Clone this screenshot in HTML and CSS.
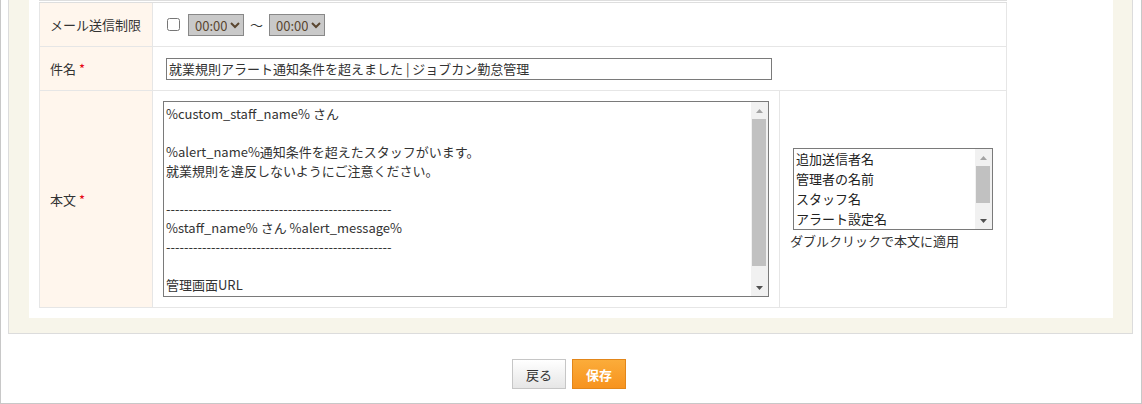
FILE: index.html
```html
<!DOCTYPE html>
<html lang="ja">
<head>
<meta charset="utf-8">
<title>アラート通知設定</title>
<link rel="stylesheet" href="styles.css">
</head>
<body>
<div class="page">
  <div class="frame">
    <div class="panel">
      <table class="form">
        <colgroup>
          <col class="col-label">
          <col class="col-main">
          <col class="col-side">
        </colgroup>
        <tr class="row-time">
          <th>メール送信制限</th>
          <td colspan="2">
            <div class="time-range">
              <input type="checkbox" class="chk">
              <select class="time">
                <option>00:00</option>
                <option>01:00</option>
              </select>
              <span class="tilde">〜</span>
              <select class="time">
                <option>00:00</option>
                <option>01:00</option>
              </select>
            </div>
          </td>
        </tr>
        <tr class="row-subject">
          <th>件名 <span class="req">*</span></th>
          <td colspan="2"><input type="text" class="subject" value="就業規則アラート通知条件を超えました | ジョブカン勤怠管理"></td>
        </tr>
        <tr class="row-body">
          <th>本文 <span class="req">*</span></th>
          <td class="cell-body">
            <div class="scroll-box">
              <textarea class="body-text">%custom_staff_name% さん

%alert_name%通知条件を超えたスタッフがいます。
就業規則を違反しないようにご注意ください。

--------------------------------------------------
%staff_name% さん %alert_message%
--------------------------------------------------

管理画面URL
%admin_url%</textarea>
              <div class="sbar">
                <span class="sb-btn"><svg width="7" height="4" viewBox="0 0 7 4"><polygon points="3.5,0 7,4 0,4" fill="#a3a3a3"/></svg></span>
                <span class="sb-track"><span class="sb-thumb thumb-body"></span></span>
                <span class="sb-btn"><svg width="7" height="4" viewBox="0 0 7 4"><polygon points="0,0 7,0 3.5,4" fill="#505050"/></svg></span>
              </div>
            </div>
          </td>
          <td class="cell-vars">
            <div class="scroll-box vars-box">
              <select class="vars" multiple size="4">
                <option>追加送信者名</option>
                <option>管理者の名前</option>
                <option>スタッフ名</option>
                <option>アラート設定名</option>
                <option>管理画面URL</option>
              </select>
              <div class="sbar">
                <span class="sb-btn"><svg width="7" height="4" viewBox="0 0 7 4"><polygon points="3.5,0 7,4 0,4" fill="#a3a3a3"/></svg></span>
                <span class="sb-track"><span class="sb-thumb thumb-vars"></span></span>
                <span class="sb-btn"><svg width="7" height="4" viewBox="0 0 7 4"><polygon points="0,0 7,0 3.5,4" fill="#505050"/></svg></span>
              </div>
            </div>
            <p class="hint">ダブルクリックで本文に適用</p>
          </td>
        </tr>
      </table>
    </div>
  </div>
  <div class="actions">
    <button class="btn">戻る</button>
    <button class="btn btn-save">保存</button>
  </div>
</div>
</body>
</html>
```

FILE: styles.css
```css
body { margin:0; font-family:"Noto Sans CJK JP", "Noto Sans", sans-serif; font-size:13px; color:#333; background:#fff; }

.page { box-sizing:border-box; height:404px; border:1px solid #c8c8c8; border-top:none; padding:0 8px 0 7px; }
.frame { background:#f7f5ea; border:1px solid #dcdcdc; border-top:none; padding:0 19px 15px 20px; }
.panel { background:#fff; padding:0 10px 10px; }

/* form table */
table.form { border-collapse:collapse; table-layout:fixed; width:967px; border-top:3px double #dedede; }
.col-label { width:113px; }
.col-main { width:627px; }
.col-side { width:227px; }
.form th, .form td { border:1px solid #e6e6e6; padding:0 10px; vertical-align:middle; }
.form th { background:#fff6ed; text-align:left; font-weight:normal; color:#333; }
.req { color:#e60012; }
.row-time td, .row-time th { height:43px; }
.row-subject td, .row-subject th { height:43px; }
.form td.cell-body { padding:10px; }

.time-range { display:flex; align-items:center; }
.chk { margin:0 8px 0 4px; width:13px; height:13px; }
select.time { width:56px; height:22px; margin:0; padding:0 0 0 2px; border:1px solid #888; border-radius:0; background:#c9c9c9; color:#5a4630; font-family:inherit; font-size:13px; }
.tilde { margin:0 6px; color:#333; font-size:13px; }

.subject { box-sizing:border-box; width:606px; height:22px; margin:0 0 0 3px; padding:0 2px; border:1px solid #7a7a7a; border-radius:0; font-family:inherit; font-size:13px; color:#333; }

/* box with a drawn scrollbar on its right edge */
.scroll-box { position:relative; width:606px; }
.sbar { position:absolute; top:1px; right:1px; bottom:1px; width:17px; display:flex; flex-direction:column; background:#f1f1f1; }
.sb-btn { height:17px; flex:none; display:flex; align-items:center; justify-content:center; }
.sb-track { flex:1; display:flex; flex-direction:column; }
.sb-thumb { margin:0 2px 0 1px; background:#c1c1c1; }
.thumb-body { height:147px; }
.thumb-vars { height:37px; }

.body-text { display:block; box-sizing:border-box; width:606px; height:196px; margin:0; padding:2px 19px 2px 2px; border:1px solid #7a7a7a; border-radius:0; resize:none; overflow:hidden; font-family:inherit; font-size:13px; line-height:19px; color:#333; }

.form td.cell-vars { padding:0 10px; }
.vars-box { width:200px; margin-left:3px; margin-top:1px; }
select.vars { display:block; box-sizing:border-box; width:200px; height:82px; margin:0; padding:0; border:1px solid #7a7a7a; border-radius:0; font-family:inherit; font-size:13px; color:#222; overflow:hidden; }
select.vars option { padding:0 2px 1px; line-height:19px; }
.hint { margin:1px 0 0; line-height:20px; color:#333; }

/* buttons */
.actions { display:flex; justify-content:center; gap:6px; padding-top:25px; padding-right:3px; }
.btn { box-sizing:border-box; height:30px; min-width:54px; padding:0 12px; border:1px solid #c6c6c6; border-radius:0; background:linear-gradient(#ffffff, #e6e6e6); font-family:inherit; font-size:13px; color:#333; }
.btn-save { border-color:#e2861a; background:linear-gradient(#fbac3a, #f7931e); color:#fff; font-weight:bold; }
```
